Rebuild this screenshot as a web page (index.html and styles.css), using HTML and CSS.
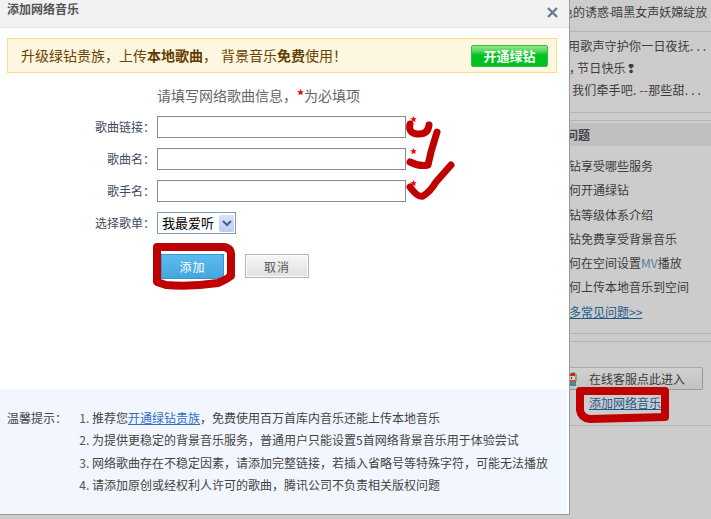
FILE: index.html
```html
<!DOCTYPE html>
<html lang="zh-CN">
<head>
<meta charset="utf-8">
<title>添加网络音乐</title>
<link rel="stylesheet" href="styles.css">
</head>
<body>
<div class="page">
  <aside class="side">
    <p class="side-title">音色的诱惑<span class="dash">-</span>暗黑女声妖嫦绽放</p>
    <ul class="news">
      <li class="n1">用歌声守护你一日夜抚. . .</li>
      <li class="n2"><span class="tight">，</span>节日快乐❢</li>
      <li class="n3">我们牵手吧. --那些甜. . .</li>
    </ul>
    <div class="rule-double"></div>
    <h3 class="faq-head">问题</h3>
    <ul class="faq">
      <li>绿钻享受哪些服务</li>
      <li>如何开通绿钻</li>
      <li>绿钻等级体系介绍</li>
      <li>绿钻免费享受背景音乐</li>
      <li>如何在空间设置<span class="mv">MV</span>播放</li>
      <li>如何上传本地音乐到空间</li>
      <li><a href="#">更多常见问题&gt;&gt;</a></li>
    </ul>
    <div class="rule-double"></div>
    <div class="service">
      <span class="service-btn">在线客服点此进入</span>
      <svg class="agent" width="10" height="16" viewBox="0 0 10 16"><path d="M1 5a4 4 0 0 1 7 -2v2H1z" fill="#a33"/><rect x="2" y="5" width="5" height="4" fill="#e8c9a0"/><rect x="3" y="6" width="1" height="2" fill="#633"/><rect x="7" y="3" width="2" height="7" fill="#6fae7a"/><rect x="1" y="9" width="7" height="3" fill="#c94a4a"/><rect x="2" y="11" width="6" height="4" fill="#3d8a9a"/></svg>
    </div>
    <a class="add-link" href="#">添加网络音乐</a>
    <div class="rule-single"></div>
  </aside>

  <section class="dialog">
    <header class="dialog-head">
      <h2>添加网络音乐</h2>
      <svg class="close" width="11" height="11" viewBox="0 0 11 11"><path d="M1 1l9 9M10 1l-9 9" stroke="#6b7b90" stroke-width="2.4" fill="none"/></svg>
    </header>
    <div class="banner">
      <p>升级绿钻贵族，上传<b>本地歌曲</b><span class="gap">，</span>背景音乐<b>免费</b>使用！</p>
      <span class="green-btn">开通绿钻</span>
    </div>
    <p class="intro">请填写网络歌曲信息，<em>*</em>为必填项</p>
    <form class="form">
      <label class="row"><span class="lab">歌曲链接：</span><input class="field" type="text"><em class="req">*</em></label>
      <label class="row"><span class="lab">歌曲名：</span><input class="field" type="text"><em class="req">*</em></label>
      <label class="row"><span class="lab">歌手名：</span><input class="field" type="text"><em class="req">*</em></label>
      <div class="row row-select"><span class="lab">选择歌单：</span>
        <div class="select"><span>我最爱听</span>
          <span class="arrow"><svg width="10" height="7" viewBox="0 0 10 7"><path d="M1 1l4 4 4-4" stroke="#4d6185" stroke-width="2.2" fill="none"/></svg></span>
        </div>
      </div>
      <div class="actions">
        <button class="btn-add" type="button">添加</button>
        <button class="btn-cancel" type="button">取消</button>
      </div>
    </form>
    <div class="notice">
      <span class="notice-label">温馨提示：</span>
      <ol class="tips">
        <li>推荐您<a href="#">开通绿钻贵族</a>，免费使用百万首库内音乐还能上传本地音乐</li>
        <li>为提供更稳定的背景音乐服务，普通用户只能设置5首网络背景音乐用于体验尝试</li>
        <li>网络歌曲存在不稳定因素，请添加完整链接，若插入省略号等特殊字符，可能无法播放</li>
        <li>请添加原创或经权利人许可的歌曲，腾讯公司不负责相关版权问题</li>
      </ol>
    </div>
  </section>

  <svg class="marks" width="711" height="519" viewBox="0 0 711 519">
    <g fill="none" stroke="#c00000" stroke-linecap="round" stroke-linejoin="round">
      <path stroke-width="7" d="M410 124Q408 133 417 134Q428 135 429 125"/>
      <path stroke-width="7" d="M437 132L431 152L428 165Q420 167 410 162"/>
      <path stroke-width="7" d="M410 187Q418 198 423 196Q430 192 436 182L451 165"/>
      <path stroke-width="8" d="M157 247L224 247Q232 248 231 256L231 276Q226 280 218 283Q190 287 166 285L157 282Z"/>
      <path stroke-width="8" d="M580 391L665 391L665 417L590 419Q581 418 580 410Z"/>
    </g>
  </svg>
</div>
</body>
</html>
```

FILE: styles.css
```css
* { box-sizing: border-box; }
html, body { margin: 0; padding: 0; }
body { font-family: "Noto Sans CJK SC", "Liberation Sans", sans-serif; font-size: 12px; }
ul, ol, p, h2, h3 { margin: 0; padding: 0; list-style: none; }
em { font-style: normal; }

.page { position: relative; width: 711px; height: 519px; background: #cccccc; overflow: hidden; display: flex; justify-content: flex-end; }

/* dimmed page behind the dialog */
.side { width: 155px; height: 519px; white-space: nowrap; color: #3c3c3c; overflow: hidden; flex: none; }
.side-title { height: 32px; padding-top: 3px; line-height: 18px; font-size: 12px; text-indent: -7px; border-bottom: 1px solid #b4b4b4; width: 155px; }
.dash { letter-spacing: -2px; }
.news { padding-top: 3px; height: 80px; }
.news li { line-height: 22px; letter-spacing: 0.2px; }
.n1 { padding-left: 12px; }
.n2 { padding-left: 13px; }
.tight { letter-spacing: -4px; }
.n3 { padding-left: 16px; }
.rule-double { height: 9px; border-top: 1px solid #b4b4b4; border-bottom: 1px solid #b4b4b4; }
.faq-head { height: 23px; margin-top: 2px; line-height: 23px; font-size: 12px; font-weight: 700; background: #c0c0c0; padding-left: 10px; color: #444; }
.faq { padding: 8px 0 0 1px; height: 187px; }
.faq li { height: 24.3px; line-height: 24px; }
.faq a { color: #1e5a8a; }
.mv { color: #5a7ea8; }
.service { position: relative; height: 23px; margin-top: 25px; }
.agent { position: absolute; left: 12px; top: 4px; }
.service-btn { display: block; width: 147px; height: 23px; line-height: 22px; padding-left: 32px; border: 1px solid #a8a8a8; border-right-color: #999; border-bottom-color: #999; border-radius: 2px; background: linear-gradient(#d0d0d0, #c2c2c2); }
.add-link { display: block; width: fit-content; margin: 4px 0 14px 33px; line-height: 17px; color: #1e5a8a; }
.rule-single { border-top: 1px solid #b4b4b4; }

/* dialog */
.dialog { position: absolute; left: 0; top: 0; width: 570px; height: 515px; background: #fff; border-right: 1px solid #9a9a9a; border-bottom: 1px solid #9a9a9a; display: flex; flex-direction: column; }
.dialog-head { height: 28px; flex: none; background: #f2f2f2; border-bottom: 1px solid #e2e2e2; display: flex; justify-content: space-between; padding: 0 11px 0 7px; }
.dialog-head h2 { font-size: 12px; line-height: 18px; font-weight: 700; color: #555; }
.close { margin-top: 7px; }
.banner { flex: none; margin: 10px 0 0 7px; width: 550px; height: 35px; background: #fdf7e1; border: 1px solid #fcdc80; display: flex; align-items: center; justify-content: space-between; padding: 0 8px 0 13px; color: #6b4300; }
.banner p { font-size: 14px; line-height: 20px; padding-bottom: 2px; }
.banner b { font-weight: 700; color: #633c00; }
.banner .gap { margin-right: 4px; }
.green-btn { width: 77px; height: 22px; line-height: 20px; text-align: center; color: #fff; font-weight: 700; font-size: 13px; border: 1px solid #35b84a; border-radius: 2px; background: linear-gradient(#8fe97e 0, #55d560 25%, #00c41f 45%, #00c020 100%); }
.intro { flex: none; margin: 12px 0 0 157px; font-size: 14px; line-height: 20px; color: #666; }
.intro em { color: #e60000; font-weight: 700; }

.form { flex: none; height: 273px; margin-top: 11px; }
.row { display: flex; align-items: center; height: 22px; margin-bottom: 10px; }
.lab { width: 157px; padding: 0 2px 2px 0; text-align: right; color: #3f4a5a; flex: none; }
.field { width: 249px; height: 22px; border: 1px solid #8a8a8a; background: #fff; padding: 0; margin: 0; flex: none; border-radius: 0; outline: none; }
.req { position: relative; z-index: 2; color: #e60000; align-self: flex-start; font-size: 14px; font-weight: 700; line-height: 13px; margin: 0 0 0 4px; }
.row-select { margin-top: 1px; margin-bottom: 0; height: 22px; }
.select { width: 79px; height: 22px; border: 1px solid #7f9db9; display: flex; align-items: center; justify-content: space-between; padding: 0 1px 0 4px; background: #fff; color: #000; font-size: 13px; line-height: 18px; }
.arrow { width: 15px; height: 17px; background: linear-gradient(#d8e3fa, #b9cdf5); border-radius: 2px; display: flex; align-items: center; justify-content: center; }
.actions { display: flex; align-items: flex-start; margin: 20px 0 0 161px; gap: 21px; }
.btn-add, .btn-cancel { font-family: inherit; font-size: 12px; letter-spacing: 1px; padding: 0; border-radius: 0; }
.btn-add { width: 63px; height: 25px; color: #fff; border: 1px solid #3a94d0; background: linear-gradient(#5cbcf2, #45a6dc); }
.btn-cancel { width: 64px; height: 24px; color: #555; border: 1px solid #b5b5b5; box-shadow: inset 0 0 0 1px #fff; background: linear-gradient(#f6f6f6, #e0e0e0); }

.notice { flex: none; width: 567px; height: 125px; background: #f2f6fe; display: flex; padding: 18px 0 0 7px; color: #444; }
.notice-label { width: 70px; flex: none; line-height: 22px; }
.tips { list-style: decimal; padding-left: 15px; }
.tips li { height: 22.3px; line-height: 22px; white-space: nowrap; }
.tips li::marker { color: #555; }
.tips a { color: #2e6fc4; }

.marks { position: absolute; left: 0; top: 0; z-index: 1; pointer-events: none; }
```
